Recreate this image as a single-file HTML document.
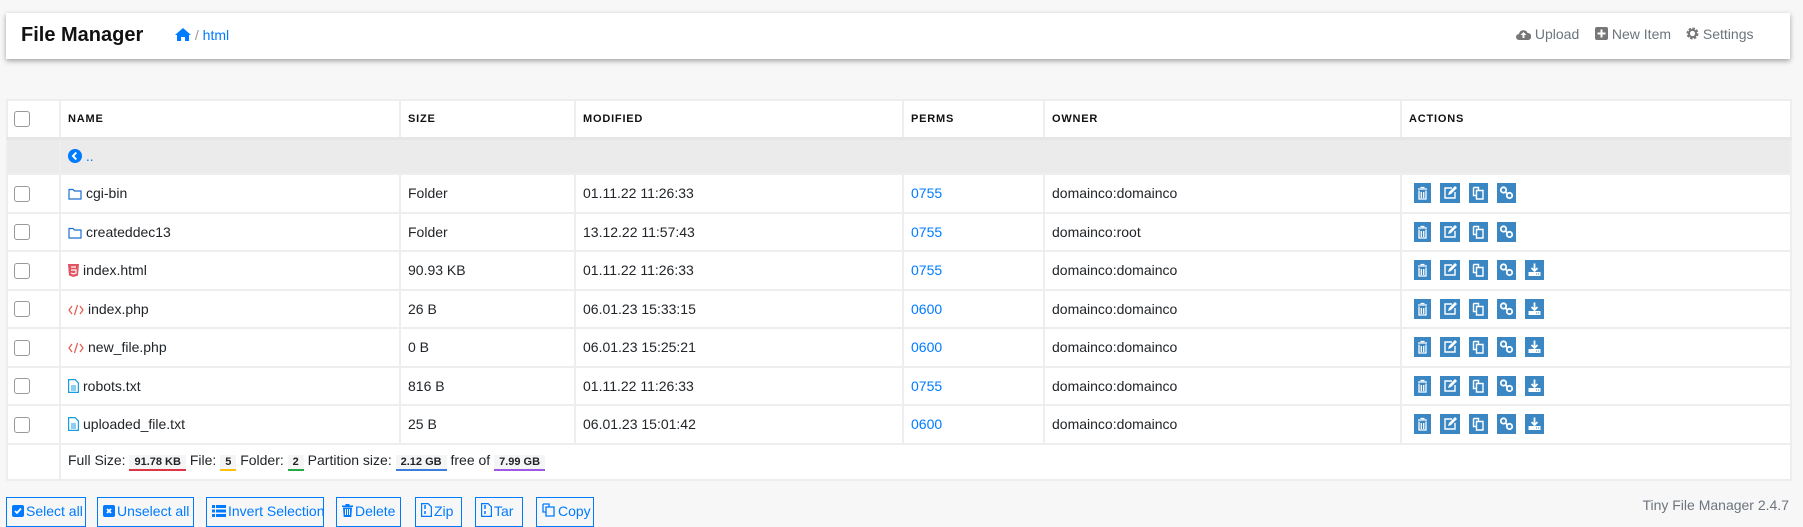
<!DOCTYPE html>
<html><head><meta charset="utf-8"><style>
*{box-sizing:border-box;margin:0;padding:0}
body{width:1803px;height:524px;overflow:hidden;background:#f7f7f7;font-family:"Liberation Sans",sans-serif;font-size:14px;color:#212529;position:relative}
.nav{position:absolute;left:6px;top:13px;width:1784px;height:46px;background:#fff;box-shadow:0 2px 5px rgba(0,0,0,.35)}
.title{position:absolute;left:15px;top:11px;font-size:20px;font-weight:bold;color:#111}
.bc{position:absolute;left:169px;top:14px;font-size:14px;color:#007bff}
.bc span{color:#999}
.rt{position:absolute;top:13px;font-size:14px;color:#6c757d}
table{position:absolute;left:6px;top:99px;width:1784px;border-collapse:collapse;table-layout:fixed;background:#fff}
td,th{border:2px solid #eee;padding:0 7px;text-align:left;vertical-align:middle;white-space:nowrap;overflow:hidden}
th{height:38px;font-size:11px;font-weight:bold;letter-spacing:.8px;color:#111;border-bottom:3px solid #e6e6e6}
tr.r td{height:38.5px}
tr.p td{height:36px;background:#ebebeb}
.cb{display:inline-block;width:16px;height:16px;border:1px solid #999;border-radius:3px;background:#fff;vertical-align:middle;margin-left:-1px}
a{color:#007bff;text-decoration:none}
.ic{display:inline-block;width:18px;height:20px;background:#3a87c4;margin-right:8px;vertical-align:middle;position:relative}
.ic svg{position:absolute;left:0;top:0}
.fi{display:inline-block;vertical-align:-2px;margin-right:4px}
.bd{display:inline-block;font-size:11px;font-weight:bold;padding:1px 5px;background:#f5f5f5;border-bottom:2px solid}
.btn{position:absolute;top:497px;height:30px;border:1px solid #007bff;color:#007bff;font-size:14px;padding:5px 5px 0 5px;background:#f7f7f7;white-space:nowrap}
.btn svg{vertical-align:-1px;margin-right:2px}
</style></head><body>
<div class="nav">
<div class="title">File Manager</div>
<div class="bc"><svg width="16" height="13" viewBox="0 0 16 13" style="vertical-align:-1px"><path d="M8 0L0 7h2v6h4V9h4v4h4V7h2z" fill="#007bff"/></svg> <span>/</span> html</div>
<div class="rt" style="left:1510px"><svg width="15" height="12" viewBox="0 0 15 12" style="vertical-align:-1px"><path d="M3 12a3 3 0 0 1 0-6 4.5 4.5 0 0 1 8.6-1A3.5 3.5 0 0 1 12 12z" fill="#777"/><path d="M7.5 4l3 3H8.5v3h-2V7h-2z" fill="#fff"/></svg> Upload</div>
<div class="rt" style="left:1589px"><svg width="13" height="13" viewBox="0 0 13 13" style="vertical-align:-1px"><rect width="13" height="13" rx="2" fill="#777"/><path d="M5.5 2.5h2v3h3v2h-3v3h-2v-3h-3v-2h3z" fill="#fff"/></svg> New Item</div>
<div class="rt" style="left:1680px"><svg width="13" height="13" viewBox="0 0 13 13" style="vertical-align:-1px"><circle cx="6.5" cy="6.5" r="4.5" fill="none" stroke="#777" stroke-width="3" stroke-dasharray="2.2 1.3"/><circle cx="6.5" cy="6.5" r="3.6" fill="none" stroke="#777" stroke-width="2"/></svg> Settings</div>
</div>
<table>
<colgroup><col style="width:53px"><col style="width:340px"><col style="width:175px"><col style="width:328px"><col style="width:141px"><col style="width:357px"><col style="width:390px"></colgroup>
<tr><th><span class="cb"></span></th><th>NAME</th><th>SIZE</th><th>MODIFIED</th><th>PERMS</th><th>OWNER</th><th>ACTIONS</th></tr>
<tr class="p"><td></td><td colspan="6"><svg width="14" height="14" viewBox="0 0 14 14" style="vertical-align:-2px"><circle cx="7" cy="7" r="7" fill="#007bff"/><path d="M8.3 3.5L5 7l3.3 3.5" stroke="#fff" stroke-width="2" fill="none"/></svg> <a>..</a></td></tr>
<tr class="r"><td><span class="cb"></span></td><td><svg class="fi" width="14" height="12" viewBox="0 0 14 12"><path d="M1 1.5h4l1.5 1.5H13v8H1z" fill="none" stroke="#1e6fd0" stroke-width="1.2"/></svg>cgi-bin</td><td>Folder</td><td>01.11.22 11:26:33</td><td><a>0755</a></td><td>domainco:domainco</td><td class="act">A4</td></tr>
<tr class="r"><td><span class="cb"></span></td><td><svg class="fi" width="14" height="12" viewBox="0 0 14 12"><path d="M1 1.5h4l1.5 1.5H13v8H1z" fill="none" stroke="#1e6fd0" stroke-width="1.2"/></svg>createddec13</td><td>Folder</td><td>13.12.22 11:57:43</td><td><a>0755</a></td><td>domainco:root</td><td class="act">A4</td></tr>
<tr class="r"><td><span class="cb"></span></td><td><svg class="fi" width="11" height="13" viewBox="0 0 11 13"><path d="M0 0h11l-1 11.5L5.5 13 1 11.5z" fill="#e05561"/><path d="M3 3h5M3 6h5v3l-2.5 1L3 9" stroke="#fff" stroke-width="1.2" fill="none"/></svg>index.html</td><td>90.93 KB</td><td>01.11.22 11:26:33</td><td><a>0755</a></td><td>domainco:domainco</td><td class="act">A5</td></tr>
<tr class="r"><td><span class="cb"></span></td><td><svg class="fi" width="16" height="12" viewBox="0 0 16 12"><path d="M4 2L1 6l3 4M12 2l3 4-3 4M9.5 1l-3 10" stroke="#e0604e" stroke-width="1.3" fill="none"/></svg>index.php</td><td>26 B</td><td>06.01.23 15:33:15</td><td><a>0600</a></td><td>domainco:domainco</td><td class="act">A5</td></tr>
<tr class="r"><td><span class="cb"></span></td><td><svg class="fi" width="16" height="12" viewBox="0 0 16 12"><path d="M4 2L1 6l3 4M12 2l3 4-3 4M9.5 1l-3 10" stroke="#e0604e" stroke-width="1.3" fill="none"/></svg>new_file.php</td><td>0 B</td><td>06.01.23 15:25:21</td><td><a>0600</a></td><td>domainco:domainco</td><td class="act">A5</td></tr>
<tr class="r"><td><span class="cb"></span></td><td><svg class="fi" width="11" height="14" viewBox="0 0 11 14"><path d="M.6.6h6.5l3.3 3.3v9.5H.6z" fill="none" stroke="#1a9de0" stroke-width="1.2"/><path d="M3 7h5M3 9h5M3 11h5" stroke="#1a9de0"/></svg>robots.txt</td><td>816 B</td><td>01.11.22 11:26:33</td><td><a>0755</a></td><td>domainco:domainco</td><td class="act">A5</td></tr>
<tr class="r"><td><span class="cb"></span></td><td><svg class="fi" width="11" height="14" viewBox="0 0 11 14"><path d="M.6.6h6.5l3.3 3.3v9.5H.6z" fill="none" stroke="#1a9de0" stroke-width="1.2"/><path d="M3 7h5M3 9h5M3 11h5" stroke="#1a9de0"/></svg>uploaded_file.txt</td><td>25 B</td><td>06.01.23 15:01:42</td><td><a>0600</a></td><td>domainco:domainco</td><td class="act">A5</td></tr>
<tr class="p"><td style="background:#fff"></td><td colspan="6" style="background:#fff">Full Size: <span class="bd" style="border-color:#dc3545">91.78 KB</span> File: <span class="bd" style="border-color:#ffc107">5</span> Folder: <span class="bd" style="border-color:#28a745">2</span> Partition size: <span class="bd" style="border-color:#3b7ddd">2.12 GB</span> free of <span class="bd" style="border-color:#9b59e6">7.99 GB</span></td></tr>
</table>
<div class="btn" style="left:6px;width:80px"><svg width="12" height="12" viewBox="0 0 12 12"><rect width="12" height="12" rx="2" fill="#007bff"/><path d="M3 6l2 2 4-4.5" stroke="#fff" stroke-width="1.8" fill="none"/></svg>Select all</div>
<div class="btn" style="left:97px;width:97px"><svg width="12" height="12" viewBox="0 0 12 12"><rect width="12" height="12" rx="2" fill="#007bff"/><path d="M4 4l4 4M8 4l-4 4" stroke="#fff" stroke-width="1.8"/></svg>Unselect all</div>
<div class="btn" style="left:206px;width:118px"><svg width="14" height="12" viewBox="0 0 14 12"><path d="M0 0h3v3H0zM4 0h10v3H4zM0 4.5h3v3H0zM4 4.5h10v3H4zM0 9h3v3H0zM4 9h10v3H4z" fill="#007bff"/></svg>Invert Selection</div>
<div class="btn" style="left:336px;width:65px"><svg width="11" height="13" viewBox="0 0 11 13"><path d="M0 1.5h11v1.5H0zM3.5 0h4v1.5h-4zM1 3.5h9l-.7 9.5H1.7z" fill="#007bff"/><path d="M3.5 5v6M5.5 5v6M7.5 5v6" stroke="#fff"/></svg>Delete</div>
<div class="btn" style="left:415px;width:47px"><svg width="11" height="14" viewBox="0 0 11 14"><path d="M.6.6h6.5l3.3 3.3v9.5H.6z" fill="none" stroke="#007bff" stroke-width="1.2"/><path d="M4 2v4M4 8v3" stroke="#007bff" stroke-width="1.5"/></svg>Zip</div>
<div class="btn" style="left:475px;width:48px"><svg width="11" height="14" viewBox="0 0 11 14"><path d="M.6.6h6.5l3.3 3.3v9.5H.6z" fill="none" stroke="#007bff" stroke-width="1.2"/><path d="M4 2v4M4 8v3" stroke="#007bff" stroke-width="1.5"/></svg>Tar</div>
<div class="btn" style="left:536px;width:58px"><svg width="14" height="14" viewBox="0 0 14 14"><path d="M1 1h6v3M1 1v8h3M4 4h8v9H4z" stroke="#007bff" stroke-width="1.3" fill="none"/></svg>Copy</div>
<div style="position:absolute;right:14px;top:497px;font-size:14px;color:#6c757d">Tiny File Manager 2.4.7</div>
<script>
var I=['<svg width="17" height="20" viewBox="0 0 17 20"><path d="M4 6h9M6.5 4.5h4M5 7.5v8.5h7V7.5M7.3 9v6M9.7 9v6" stroke="#fff" stroke-width="1.3" fill="none"/></svg>',
'<svg width="20" height="20" viewBox="0 0 20 20"><path d="M12 5H5v10h10V9" stroke="#fff" stroke-width="1.4" fill="none"/><path d="M8 12l1-3 6-6 2 2-6 6z" fill="#fff"/></svg>',
'<svg width="19" height="20" viewBox="0 0 19 20"><path d="M4.5 4.5h5v3M4.5 4.5v8h3M7.5 7.5h6.5v8.5H7.5z" stroke="#fff" stroke-width="1.4" fill="none"/></svg>',
'<svg width="19" height="20" viewBox="0 0 19 20"><circle cx="6.5" cy="7" r="2.7" stroke="#fff" stroke-width="1.8" fill="none"/><circle cx="12.5" cy="12.5" r="2.7" stroke="#fff" stroke-width="1.8" fill="none"/><path d="M8.5 9l2 2" stroke="#fff" stroke-width="1.8"/></svg>',
'<svg width="19" height="20" viewBox="0 0 19 20"><path d="M9.5 3.5v7M6.5 8l3 3 3-3" stroke="#fff" stroke-width="1.8" fill="none"/><rect x="3.5" y="12" width="12" height="4" fill="#fff"/><path d="M11 14h1M13 14h1" stroke="#3a87c4"/></svg>'];
var W=[17,20,19,19,19];
document.querySelectorAll('.act').forEach(function(td){var n=td.textContent=='A5'?5:4;var h='';for(var i=0;i<n;i++)h+='<span class="ic" style="width:'+W[i]+'px;margin-right:9px">'+I[i]+'</span>';td.innerHTML=h;td.style.paddingLeft='12px';});
</script>
</body></html>
